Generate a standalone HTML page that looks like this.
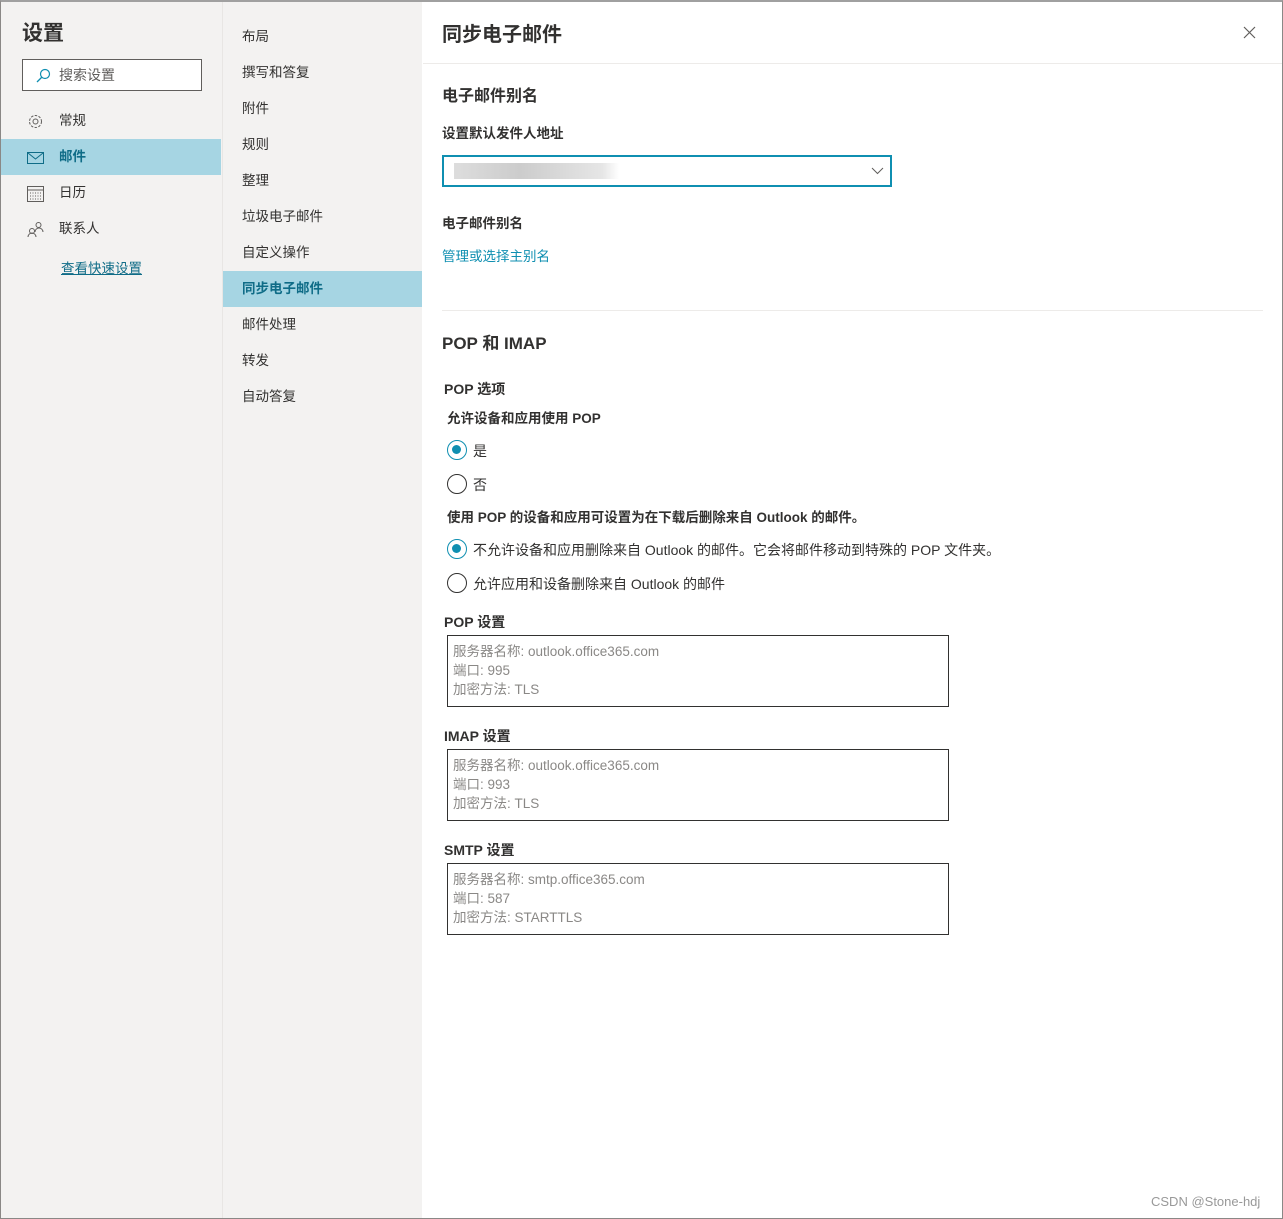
<!DOCTYPE html><html><head><meta charset="utf-8"><style>
*{margin:0;padding:0;box-sizing:border-box}
body{width:1283px;height:1219px;font-family:"Liberation Sans","Noto Sans CJK SC",sans-serif;color:#323130;background:#fff;position:relative;overflow:hidden;font-size:14px}
.abs{position:absolute}
#frame{position:absolute;left:0;top:0;width:1283px;height:1219px;border:1px solid #8a8886;border-top:2px solid #a0a0a0}
#nav1{left:1px;top:2px;width:221px;height:1216px;background:#f3f2f1}
#nav2{left:222px;top:2px;width:200px;height:1216px;background:#f3f2f1;border-left:1px solid #e8e6e4}
.sel{background:#a6d5e3;color:#0f6c87;font-weight:bold}
.n2{position:absolute;left:0;width:199px;height:36px;line-height:36px;padding-left:19px;font-size:13.5px}
.n1{position:absolute;left:0;width:220px;height:36px;line-height:36px;padding-left:58px;font-size:13.5px}
.n1 svg{position:absolute;left:26px;top:10px}
.box{position:absolute;left:447px;width:502px;height:72px;border:1px solid #323130;padding:6px 5px;font-size:13.5px;line-height:19px;color:#8a8886}
.radio{position:absolute;left:447px;width:20px;height:20px;border:1.5px solid #323130;border-radius:50%}
.radio.on{border-color:#0f8fb1}
.radio.on::after{content:"";position:absolute;left:4px;top:4px;width:9px;height:9px;border-radius:50%;background:#0f8fb1}
.rl{position:absolute;left:473px;font-size:14px}
.b{font-weight:bold}
</style></head><body>
<div id="nav1" class="abs">
<div class="abs b" style="left:21px;top:15px;font-size:21px">设置</div>
<div class="abs" style="left:21px;top:57px;width:180px;height:32px;border:1px solid #605e5c;background:#fff;font-size:14px;line-height:30px;padding-left:36px;color:#605e5c">搜索设置
<svg class="abs" style="left:13px;top:8px" width="15" height="15" viewBox="0 0 15 15"><circle cx="9" cy="6" r="4.5" fill="none" stroke="#0f8fb1" stroke-width="1.2"/><path d="M6 9L1 14" stroke="#0f8fb1" stroke-width="1.3"/></svg></div>
<div class="n1" style="top:101px">常规<svg width="17" height="17" viewBox="0 0 17 17"><circle cx="8.5" cy="8.5" r="6" fill="none" stroke="#605e5c" stroke-dasharray="2.5 1.4"/><circle cx="8.5" cy="8.5" r="2.5" fill="none" stroke="#605e5c"/></svg></div>
<div class="n1 sel" style="top:137px">邮件<svg width="17" height="14" viewBox="0 0 17 14" style="top:12px"><rect x="0.5" y="1.5" width="16" height="11" fill="none" stroke="#0f6c87"/><path d="M1 2l7.5 6 7.5-6" fill="none" stroke="#0f6c87"/></svg></div>
<div class="n1" style="top:173px">日历<svg width="17" height="17" viewBox="0 0 17 17"><rect x="0.5" y="1.5" width="16" height="15" fill="none" stroke="#605e5c"/><path d="M1 5h15" stroke="#605e5c"/><path d="M3 8h11M3 11h11M3 14h11" stroke="#605e5c" stroke-dasharray="1 1.5"/></svg></div>
<div class="n1" style="top:209px">联系人<svg width="17" height="17" viewBox="0 0 17 17"><circle cx="5" cy="10" r="2.5" fill="none" stroke="#605e5c"/><path d="M1 16a4 4 0 0 1 8 0" fill="none" stroke="#605e5c"/><circle cx="11.5" cy="4" r="2.5" fill="none" stroke="#605e5c"/><path d="M8 11a4 4 0 0 1 8 0" fill="none" stroke="#605e5c"/></svg></div>
<div class="abs" style="left:60px;top:255px;font-size:13.5px;color:#0f6c87;text-decoration:underline">查看快速设置</div>
</div>
<div id="nav2" class="abs">
<div class="n2" style="top:17px">布局</div>
<div class="n2" style="top:53px">撰写和答复</div>
<div class="n2" style="top:89px">附件</div>
<div class="n2" style="top:125px">规则</div>
<div class="n2" style="top:161px">整理</div>
<div class="n2" style="top:197px">垃圾电子邮件</div>
<div class="n2" style="top:233px">自定义操作</div>
<div class="n2 sel" style="top:269px">同步电子邮件</div>
<div class="n2" style="top:305px">邮件处理</div>
<div class="n2" style="top:341px">转发</div>
<div class="n2" style="top:377px">自动答复</div>
</div>
<div class="abs b" style="left:442px;top:18px;font-size:20px">同步电子邮件</div>
<svg class="abs" style="left:1243px;top:26px" width="13" height="13" viewBox="0 0 13 13"><path d="M1 1l11 11M12 1L1 12" stroke="#605e5c" stroke-width="1.2"/></svg>
<div class="abs" style="left:423px;top:63px;width:859px;height:1px;background:#edebe9"></div>
<div class="abs b" style="left:442px;top:82px;font-size:16px">电子邮件别名</div>
<div class="abs b" style="left:442px;top:122px;font-size:13.5px">设置默认发件人地址</div>
<div class="abs" style="left:442px;top:155px;width:450px;height:32px;border:2px solid #0f8fb1">
<div class="abs" style="left:10px;top:6px;width:165px;height:16px;background:linear-gradient(90deg,#ddd,#ccc 40%,#e6e6e6 90%,#fff)"></div>
<svg class="abs" style="left:427px;top:10px" width="13" height="8" viewBox="0 0 13 8"><path d="M1 1l5.5 5.5L12 1" fill="none" stroke="#605e5c"/></svg></div>
<div class="abs b" style="left:442px;top:212px;font-size:13.5px">电子邮件别名</div>
<div class="abs" style="left:442px;top:245px;font-size:13.5px;color:#0f8fb1">管理或选择主别名</div>
<div class="abs" style="left:442px;top:310px;width:821px;height:1px;background:#edebe9"></div>
<div class="abs b" style="left:442px;top:329px;font-size:17px">POP 和 IMAP</div>
<div class="abs b" style="left:444px;top:379px;font-size:14px">POP 选项</div>
<div class="abs b" style="left:447px;top:407px;font-size:13.5px">允许设备和应用使用 POP</div>
<div class="radio on" style="top:440px"></div><div class="rl" style="top:441px">是</div>
<div class="radio" style="top:474px"></div><div class="rl" style="top:475px">否</div>
<div class="abs b" style="left:447px;top:506px;font-size:13.5px">使用 POP 的设备和应用可设置为在下载后删除来自 Outlook 的邮件。</div>
<div class="radio on" style="top:539px"></div><div class="rl" style="top:540px">不允许设备和应用删除来自 Outlook 的邮件。它会将邮件移动到特殊的 POP 文件夹。</div>
<div class="radio" style="top:573px"></div><div class="rl" style="top:574px">允许应用和设备删除来自 Outlook 的邮件</div>
<div class="abs b" style="left:444px;top:612px;font-size:14px">POP 设置</div>
<div class="box" style="top:635px">服务器名称: outlook.office365.com<br>端口: 995<br>加密方法: TLS</div>
<div class="abs b" style="left:444px;top:726px;font-size:14px">IMAP 设置</div>
<div class="box" style="top:749px">服务器名称: outlook.office365.com<br>端口: 993<br>加密方法: TLS</div>
<div class="abs b" style="left:444px;top:840px;font-size:14px">SMTP 设置</div>
<div class="box" style="top:863px">服务器名称: smtp.office365.com<br>端口: 587<br>加密方法: STARTTLS</div>
<div class="abs" style="left:1151px;top:1194px;font-size:13px;color:#999">CSDN @Stone-hdj</div>
<div id="frame"></div>
</body></html>
